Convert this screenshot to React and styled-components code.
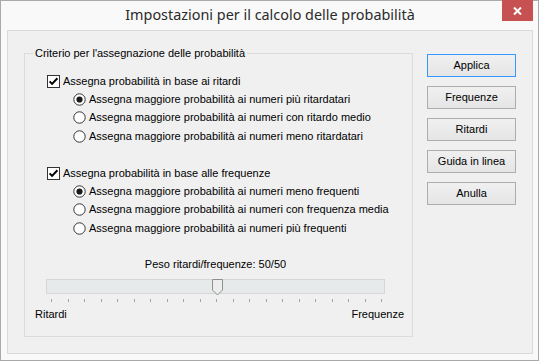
import React from 'react';
import styled, { createGlobalStyle } from 'styled-components';

const GlobalStyle = createGlobalStyle`
  html, body { margin: 0; padding: 0; background: #ffffff; }
  body { font-family: "Liberation Sans", Arial, sans-serif; font-size: 11px; color: #000; }
  *, *::before, *::after { box-sizing: border-box; }
`;

const Window = styled.div`
  width: 539px;
  height: 361px;
  border: 1px solid #aaaaaa;
  background: #f9f9f9;
  display: flex;
  flex-direction: column;
  padding: 0 5px 6px 6px;
`;

const TitleBar = styled.div`
  height: 29px;
  flex: none;
  display: grid;
  grid-template-columns: 1fr auto 1fr;
  align-items: start;
`;

const Title = styled.div`
  grid-column: 2;
  font-family: "Noto Sans", "Open Sans", sans-serif;
  font-size: 14.4px;
  line-height: 20px;
  padding-top: 4px;
  color: #2b2b2b;
  white-space: nowrap;
`;

const CloseButton = styled.div`
  grid-column: 3;
  justify-self: end;
  width: 31px;
  height: 21px;
  margin-top: -1px;
  background: #c75050;
  display: flex;
  align-items: center;
  justify-content: center;
`;

const Client = styled.div`
  flex: 1;
  border: 1px solid #dadada;
  background: #f0f0f0;
  display: flex;
  align-items: flex-start;
  gap: 14px;
  padding: 22px 16px 0 16px;
`;

const GroupBox = styled.div`
  position: relative;
  width: 389px;
  border: 1px solid #dcdcdc;
  padding: 18px 0 15px 0;
`;

const Legend = styled.div`
  position: absolute;
  top: -7px;
  left: 8px;
  padding: 0 2px;
  line-height: 13px;
  background: #f0f0f0;
  white-space: nowrap;
`;

const Options = styled.div`
  padding-left: 22px;
  display: flex;
  flex-direction: column;
  gap: 18.4px;
`;

const Section = styled.div`
  display: flex;
  flex-direction: column;
`;

const Row = styled.div`
  height: 18.4px;
  display: flex;
  align-items: center;
  gap: 3px;
  padding-left: ${p => (p.$radio ? '26px' : '0')};
  white-space: nowrap;
  line-height: 13px;
`;

const SliderArea = styled.div`
  margin-top: 20px;
  padding-left: 21px;
  width: 360px;
`;

const Caption = styled.div`
  width: 339px;
  text-align: center;
  line-height: 13px;
  height: 13px;
`;

const Track = styled.div`
  position: relative;
  width: 339px;
  height: 15px;
  margin-top: 8.4px;
  border: 1px solid #d6d6d6;
  background: #e7eaea;
`;

const Thumb = styled.svg`
  position: absolute;
  top: -1px;
  display: block;
`;

const Ticks = styled.div`
  width: 339px;
  height: 3px;
  margin-top: 5px;
  padding: 0 3px 0 5px;
  display: flex;
  justify-content: space-between;
`;

const Tick = styled.span`
  width: 1px;
  height: 3px;
  background: #a3a3a3;
`;

const ScaleLabels = styled.div`
  margin-top: 6px;
  margin-left: 10px;
  width: 369px;
  display: flex;
  justify-content: space-between;
  line-height: 13px;
`;

const ButtonColumn = styled.div`
  padding-top: 1px;
  display: flex;
  flex-direction: column;
  gap: 9px;
`;

const Button = styled.div`
  width: 89px;
  height: 23px;
  border: 1px solid ${p => (p.$default ? '#3399ff' : '#adadad')};
  background: linear-gradient(#f0f0f0, #e5e5e5);
  display: flex;
  align-items: center;
  justify-content: center;
  line-height: 13px;
  color: #000;
`;

const CheckBox = ({ checked }) => (
  <svg width="13" height="13" viewBox="0 0 13 13" style={{ flex: 'none' }}>
    <rect x="0.5" y="0.5" width="12" height="12" fill="#fff" stroke="#333" />
    {checked && (
      <path d="M2.6 6.4 L5.1 8.9 L10.4 3.3" fill="none" stroke="#000" strokeWidth="2" />
    )}
  </svg>
);

const Radio = ({ checked }) => (
  <svg width="13" height="13" viewBox="0 0 13 13" style={{ flex: 'none' }}>
    <circle cx="6.5" cy="6.5" r="5.7" fill="#fff" stroke="#333" />
    {checked && <circle cx="6.5" cy="6.5" r="3.1" fill="#1a1a1a" />}
  </svg>
);

const sections = [
  {
    label: 'Assegna probabilità in base ai ritardi',
    options: [
      'Assegna maggiore probabilità ai numeri più ritardatari',
      'Assegna maggiore probabilità ai numeri con ritardo medio',
      'Assegna maggiore probabilità ai numeri meno ritardatari',
    ],
  },
  {
    label: 'Assegna probabilità in base alle frequenze',
    options: [
      'Assegna maggiore probabilità ai numeri meno frequenti',
      'Assegna maggiore probabilità ai numeri con frequenza media',
      'Assegna maggiore probabilità ai numeri più frequenti',
    ],
  },
];

const buttons = ['Applica', 'Frequenze', 'Ritardi', 'Guida in linea', 'Anulla'];

export default function App() {
  const value = 50;
  const thumbLeft = 5 + (330 * value) / 100 - 5;
  return (
    <>
      <GlobalStyle />
      <Window>
        <TitleBar>
          <Title>Impostazioni per il calcolo delle probabilità</Title>
          <CloseButton>
            <svg width="9" height="8" viewBox="0 0 9 8">
              <path d="M1 0.5 L8 7.5 M8 0.5 L1 7.5" stroke="#fff" strokeWidth="2" />
            </svg>
          </CloseButton>
        </TitleBar>
        <Client>
          <GroupBox>
            <Legend>Criterio per l'assegnazione delle probabilità</Legend>
            <Options>
              {sections.map((s) => (
                <Section key={s.label}>
                  <Row>
                    <CheckBox checked />
                    <span>{s.label}</span>
                  </Row>
                  {s.options.map((o, i) => (
                    <Row $radio key={o}>
                      <Radio checked={i === 0} />
                      <span>{o}</span>
                    </Row>
                  ))}
                </Section>
              ))}
            </Options>
            <SliderArea>
              <Caption>Peso ritardi/frequenze: 50/50</Caption>
              <Track>
                <Thumb width="11" height="17" viewBox="0 0 11 17" style={{ left: thumbLeft }}>
                  <path d="M0.5 0.5 H10.5 V11 L5.5 16 L0.5 11 Z" fill="#ededed" stroke="#8f8f8f" />
                </Thumb>
              </Track>
              <Ticks>
                {Array.from({ length: 21 }).map((_, i) => (
                  <Tick key={i} />
                ))}
              </Ticks>
            </SliderArea>
            <ScaleLabels>
              <span>Ritardi</span>
              <span>Frequenze</span>
            </ScaleLabels>
          </GroupBox>
          <ButtonColumn>
            {buttons.map((b, i) => (
              <Button key={b} $default={i === 0}>
                {b}
              </Button>
            ))}
          </ButtonColumn>
        </Client>
      </Window>
    </>
  );
}
